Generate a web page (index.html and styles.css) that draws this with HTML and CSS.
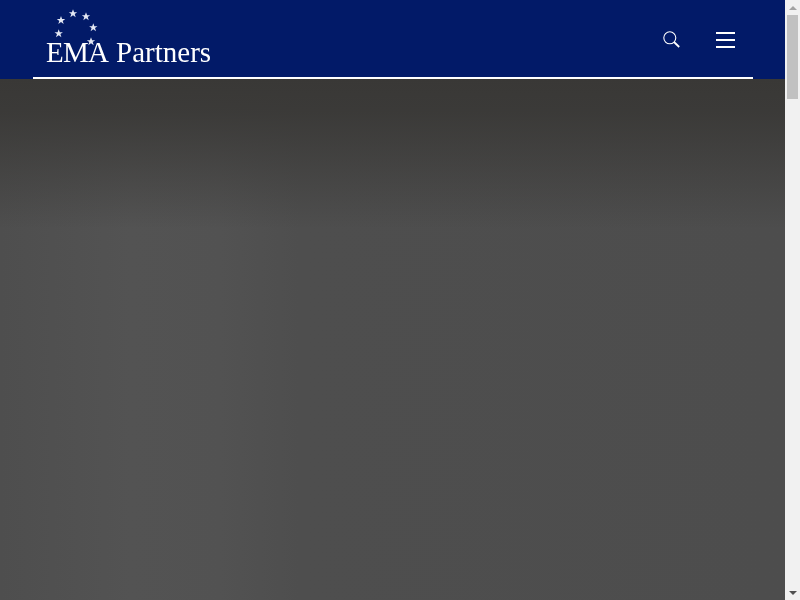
FILE: index.html
```html
<!DOCTYPE html>
<html lang="en">
<head>
<meta charset="utf-8">
<title>EMA Partners</title>
<link rel="stylesheet" href="styles.css">
</head>
<body>
<div class="viewport">
  <div class="page">
    <header class="site-header">
      <div class="header-inner">
        <a class="logo" href="#">
          <span class="logo-text"><span class="logo-ema">EMA</span><span class="logo-partners">Partners</span></span>
          <svg class="logo-stars" width="60" height="48" viewBox="0 0 60 48" aria-hidden="true">
            <defs><path id="star" d="M0-4.2 1.1-1.3 4.2-1.3 1.7.6 2.7 3.7 0 1.8-2.7 3.7-1.7.6-4.2-1.3-1.1-1.3Z"/></defs>
            <g fill="#e4e8f4">
              <use href="#star" x="13.7" y="33.5"/>
              <use href="#star" x="16" y="20.3"/>
              <use href="#star" x="28" y="13.5"/>
              <use href="#star" x="41" y="16.5"/>
              <use href="#star" x="48.3" y="27.5"/>
              <use href="#star" x="46" y="41.5"/>
            </g>
          </svg>
        </a>
        <div class="header-actions">
          <svg class="icon-search" width="17" height="17" viewBox="0 0 17 17" aria-hidden="true">
            <circle cx="6.8" cy="6.8" r="6" fill="none" stroke="#fff" stroke-width="1.1"/>
            <path d="M11 11 16.2 16" stroke="#fff" stroke-width="1.8" fill="none"/>
          </svg>
          <div class="hamburger"><span></span><span></span><span></span></div>
        </div>
      </div>
    </header>
    <main class="hero"></main>
  </div>
  <div class="scrollbar" aria-hidden="true">
    <div class="arrow arrow-up"></div>
    <div class="track"><div class="thumb"></div></div>
    <div class="arrow arrow-down"></div>
  </div>
</div>
</body>
</html>
```
FILE: styles.css
```css
html, body { margin: 0; padding: 0; }
body { font-family: "Liberation Serif", serif; overflow: hidden; }
.viewport { display: flex; height: 600px; }
.page { flex: 1; display: flex; flex-direction: column; min-width: 0; }
.site-header { background: #021a68; height: 79px; flex: none; }
.header-inner {
  box-sizing: border-box;
  width: 720px;
  height: 79px;
  margin-left: 33px;
  padding: 0 18px 0 12px;
  border-bottom: 2px solid #fff;
  display: flex;
  justify-content: space-between;
  align-items: flex-start;
}
.logo { display: block; position: relative; width: 170px; height: 77px; color: #fff; text-decoration: none; }
.logo-stars { position: absolute; left: 0; top: 0; }
.logo-text { display: flex; gap: 8px; padding-left: 1px; margin-top: 36px; font-size: 29px; line-height: 32px; white-space: nowrap; filter: blur(0.3px); }
.logo-ema { letter-spacing: -0.8px; }
.logo-partners { letter-spacing: 0; }
.header-actions { display: flex; align-items: center; gap: 36px; padding-top: 31px; }
.icon-search { display: block; }
.hamburger { width: 19px; height: 16px; display: flex; flex-direction: column; justify-content: space-between; }
.hamburger span { display: block; height: 2px; background: #fff; }
.hero {
  flex: 1;
  background:
    linear-gradient(rgb(57, 56, 54) 0, rgba(57, 56, 54, 0.9) 33px, rgba(57, 56, 54, 0.7) 60px, rgba(57, 56, 54, 0.39) 100px, rgba(57, 56, 54, 0) 150px),
    linear-gradient(90deg, #4e4e4e 0, #535353 130px, #525252 220px, #4e4e4e 300px, #4d4d4d 100%);
}
.scrollbar { flex: none; width: 15px; background: #f1f1f1; display: flex; flex-direction: column; }
.arrow { flex: none; height: 15px; display: flex; align-items: center; justify-content: center; }
.arrow::before { content: ""; width: 0; height: 0; border-left: 4px solid transparent; border-right: 4px solid transparent; }
.arrow-up::before { border-bottom: 4px solid #a3a3a3; }
.arrow-down::before { border-top: 4px solid #505050; }
.track { flex: 1; }
.thumb { width: 11px; height: 84px; margin-left: 2px; background: #c1c1c1; }
```
